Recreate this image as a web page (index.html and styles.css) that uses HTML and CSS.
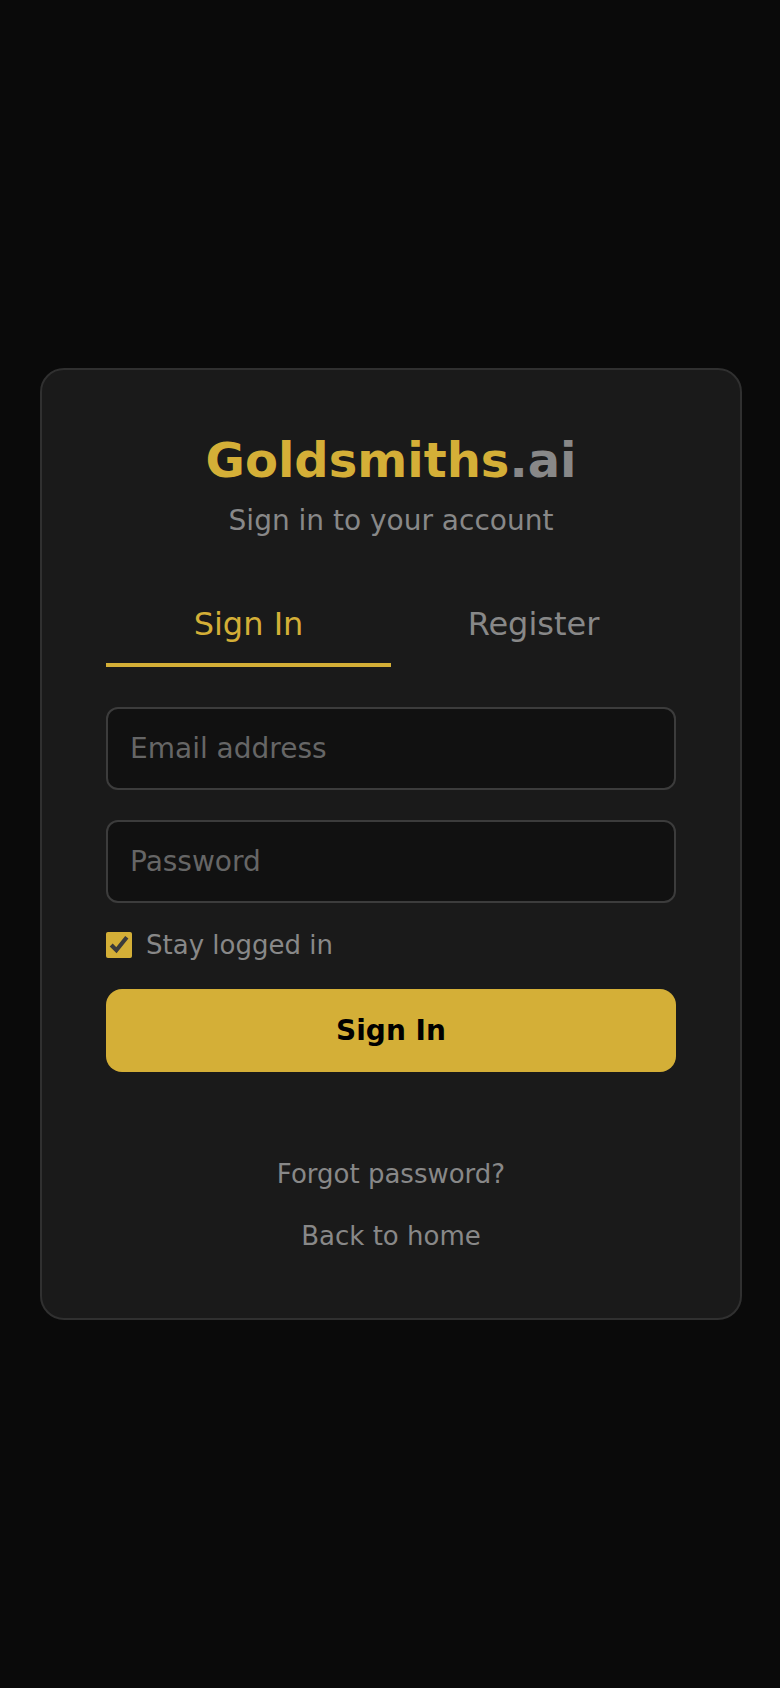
FILE: index.html
```html
<!DOCTYPE html>
<html lang="en">
<head>
<meta charset="utf-8">
<title>Goldsmiths.ai – Sign In</title>
<link rel="stylesheet" href="styles.css">
</head>
<body>
  <main class="card">
    <header class="brand">
      <h1 class="logo">Goldsmiths<span class="logo-ai">.ai</span></h1>
      <p class="subtitle">Sign in to your account</p>
    </header>

    <nav class="tabs">
      <button class="tab tab-active" type="button">Sign In</button>
      <button class="tab" type="button">Register</button>
    </nav>

    <form class="form">
      <input class="field field-email" type="email" placeholder="Email address">
      <input class="field field-password" type="password" placeholder="Password">
      <label class="remember">
        <input class="remember-box" type="checkbox" checked>
        <span class="remember-text">Stay logged in</span>
      </label>
      <button class="submit" type="button">Sign In</button>
    </form>

    <div class="links">
      <a class="link" href="#">Forgot password?</a>
      <a class="link" href="#">Back to home</a>
    </div>
  </main>
</body>
</html>
```
FILE: styles.css
```css
* {
  box-sizing: border-box;
}

html, body {
  margin: 0;
  padding: 0;
}

body {
  min-height: 100vh;
  padding-left: 2px;
  background: #0a0a0a;
  font-family: "DejaVu Sans", Verdana, sans-serif;
  display: flex;
  align-items: center;
  justify-content: center;
}

.card {
  width: 702px;
  background: #1a1a1a;
  border: 2px solid #303030;
  border-radius: 24px;
  padding: 62px 64px 67px;
  display: flex;
  flex-direction: column;
}

.brand {
  text-align: center;
}

.logo {
  margin: 0;
  font-size: 48px;
  font-weight: bold;
  line-height: normal;
  color: #d4af37;
}

.logo-ai {
  color: #888888;
}

.subtitle {
  margin: 16px 0 0;
  font-size: 28px;
  line-height: normal;
  color: #888888;
}

.tabs {
  display: flex;
  margin-top: 48px;
}

.tab {
  flex: 1;
  background: none;
  border: none;
  border-bottom: 4px solid transparent;
  padding: 20px 0;
  font-family: inherit;
  font-size: 32px;
  line-height: normal;
  color: #888888;
  cursor: pointer;
}

.tab-active {
  color: #d4af37;
  border-bottom-color: #d4af37;
}

.form {
  margin-top: 40.5px;
  display: flex;
  flex-direction: column;
}

.field {
  width: 100%;
  background: #111111;
  border: 2px solid #3c3c3c;
  border-radius: 12px;
  padding: 23px 22px;
  font-family: inherit;
  font-size: 28px;
  line-height: normal;
  color: #dddddd;
  outline: none;
}

.field::placeholder {
  color: #666666;
}

.field-password {
  margin-top: 29.5px;
}

.remember {
  margin-top: 27px;
  display: flex;
  align-items: center;
  gap: 14px;
  cursor: pointer;
}

.remember-box {
  width: 26px;
  height: 26px;
  margin: 0;
  accent-color: #d4af37;
}

.remember-text {
  font-size: 26px;
  line-height: normal;
  color: #888888;
}

.submit {
  margin-top: 29.3px;
  width: 100%;
  border: none;
  border-radius: 16px;
  background: #d4af37;
  color: #000000;
  padding: 25px 0;
  font-family: inherit;
  font-size: 28px;
  font-weight: bold;
  line-height: normal;
  cursor: pointer;
}

.links {
  margin-top: 87px;
  display: flex;
  flex-direction: column;
  align-items: center;
  gap: 32px;
}

.link {
  font-size: 26px;
  line-height: normal;
  color: #888888;
  text-decoration: none;
}
```
